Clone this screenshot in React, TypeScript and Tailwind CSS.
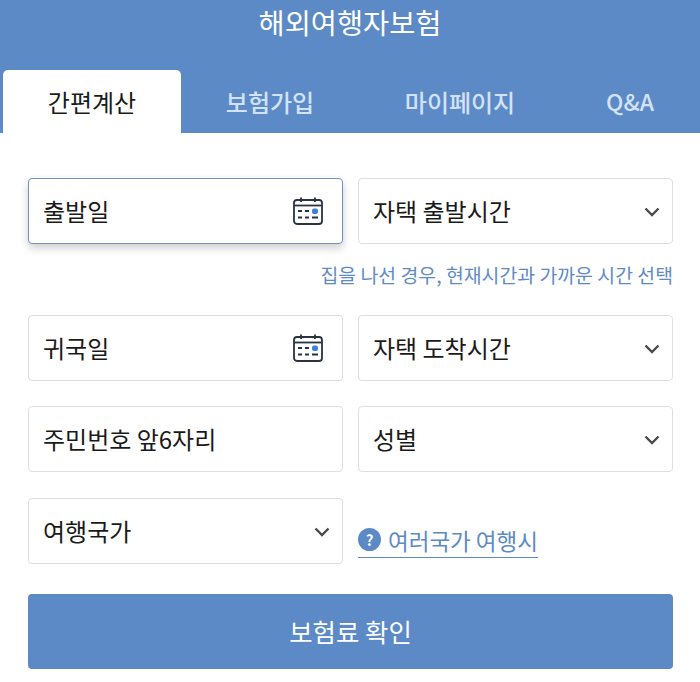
const font = { fontFamily: '"Noto Sans CJK KR", "Noto Sans", sans-serif' };

function Calendar() {
  return (
    <svg width="30" height="28" viewBox="0 0 30 28" fill="none" className="shrink-0">
      <rect x="1" y="3" width="28" height="24" rx="3" stroke="#2b3240" strokeWidth="1.8" />
      <path d="M1 8.5H29" stroke="#2b3240" strokeWidth="1.8" />
      <path d="M8 0.5V5M22 0.5V5" stroke="#2b3240" strokeWidth="1.8" />
      <path d="M5 14H9M12 14H16M5 20.5H9M12 20.5H16M19 20.5H25" stroke="#2b3240" strokeWidth="2" />
      <rect x="19" y="11.5" width="6" height="5.5" rx="2" fill="#3b82d6" />
    </svg>
  );
}

function Chevron() {
  return (
    <svg width="16" height="10" viewBox="0 0 16 10" fill="none" className="mt-[2px] shrink-0">
      <path d="M1.5 1.5L8 8L14.5 1.5" stroke="#4a4a4a" strokeWidth="2.4" />
    </svg>
  );
}

function Field({ label, icon, focused }: { label: string; icon?: "cal" | "chev"; focused?: boolean }) {
  return (
    <div
      className={
        "flex h-[66px] items-center justify-between rounded-[4px] border bg-white text-[24px] text-[#1a1a1a] " +
        (icon === "cal" ? "pl-[14px] pr-[19px] " : "pl-[14px] pr-[12px] ") +
        (focused ? "border-[#6f93c4] shadow-[0_4px_8px_rgba(0,0,0,0.2)]" : "border-[#dedede]")
      }
    >
      <span>{label}</span>
      {icon === "cal" && <Calendar />}
      {icon === "chev" && <Chevron />}
    </div>
  );
}

export default function App() {
  return (
    <div className="h-[682px] w-[700px] overflow-hidden bg-white" style={font}>
      <header className="h-[133px] bg-[#5b8ac7]">
        <h1 className="pt-[2px] text-center text-[28.4px] leading-[40px] font-normal text-white">해외여행자보험</h1>
        <nav className="mt-[28px] flex h-[63px] pl-[3px] text-[24px]">
          <div className="flex w-[178px] items-center justify-center rounded-t-[5px] bg-white text-[#1a1a1a]">간편계산</div>
          <div className="flex w-[178px] items-center justify-center font-medium text-[#d3e2f6]">보험가입</div>
          <div className="flex w-[202px] items-center justify-center font-medium text-[#d3e2f6]">마이페이지</div>
          <div className="flex w-[138px] items-center justify-center text-[23px] font-medium text-[#d3e2f6]">Q&amp;A</div>
        </nav>
      </header>

      <main className="pl-[28px] pr-[27px] pt-[45px]">
        <div className="grid grid-cols-[315px_315px] gap-x-[15px]">
          <Field label="출발일" icon="cal" focused />
          <Field label="자택 출발시간" icon="chev" />
        </div>
        <p className="mt-[17px] text-right text-[19.4px] leading-[28px] text-[#5f8bc4]">
          집을 나선 경우, 현재시간과 가까운 시간 선택
        </p>
        <div className="mt-[26px] grid grid-cols-[315px_315px] gap-x-[15px] gap-y-[25.4px]">
          <Field label="귀국일" icon="cal" />
          <Field label="자택 도착시간" icon="chev" />
          <Field label="주민번호 앞6자리" />
          <Field label="성별" icon="chev" />
          <Field label="여행국가" icon="chev" />
          <div className="flex items-end pb-[6px]">
            <a className="flex items-center gap-[7px] border-b border-[#5b8ac7] pb-[1px] text-[22.5px] leading-[32px] text-[#5b8ac7]">
              <span className="flex h-[23px] w-[23px] items-center justify-center rounded-full bg-[#5b8ac7] text-[15px] leading-none font-bold text-white">
                ?
              </span>
              여러국가 여행시
            </a>
          </div>
        </div>
        <button className="mt-[30px] flex h-[75px] w-full items-center justify-center rounded-[4px] bg-[#5b8ac7] text-[25.4px] text-white">
          보험료 확인
        </button>
      </main>
    </div>
  );
}
